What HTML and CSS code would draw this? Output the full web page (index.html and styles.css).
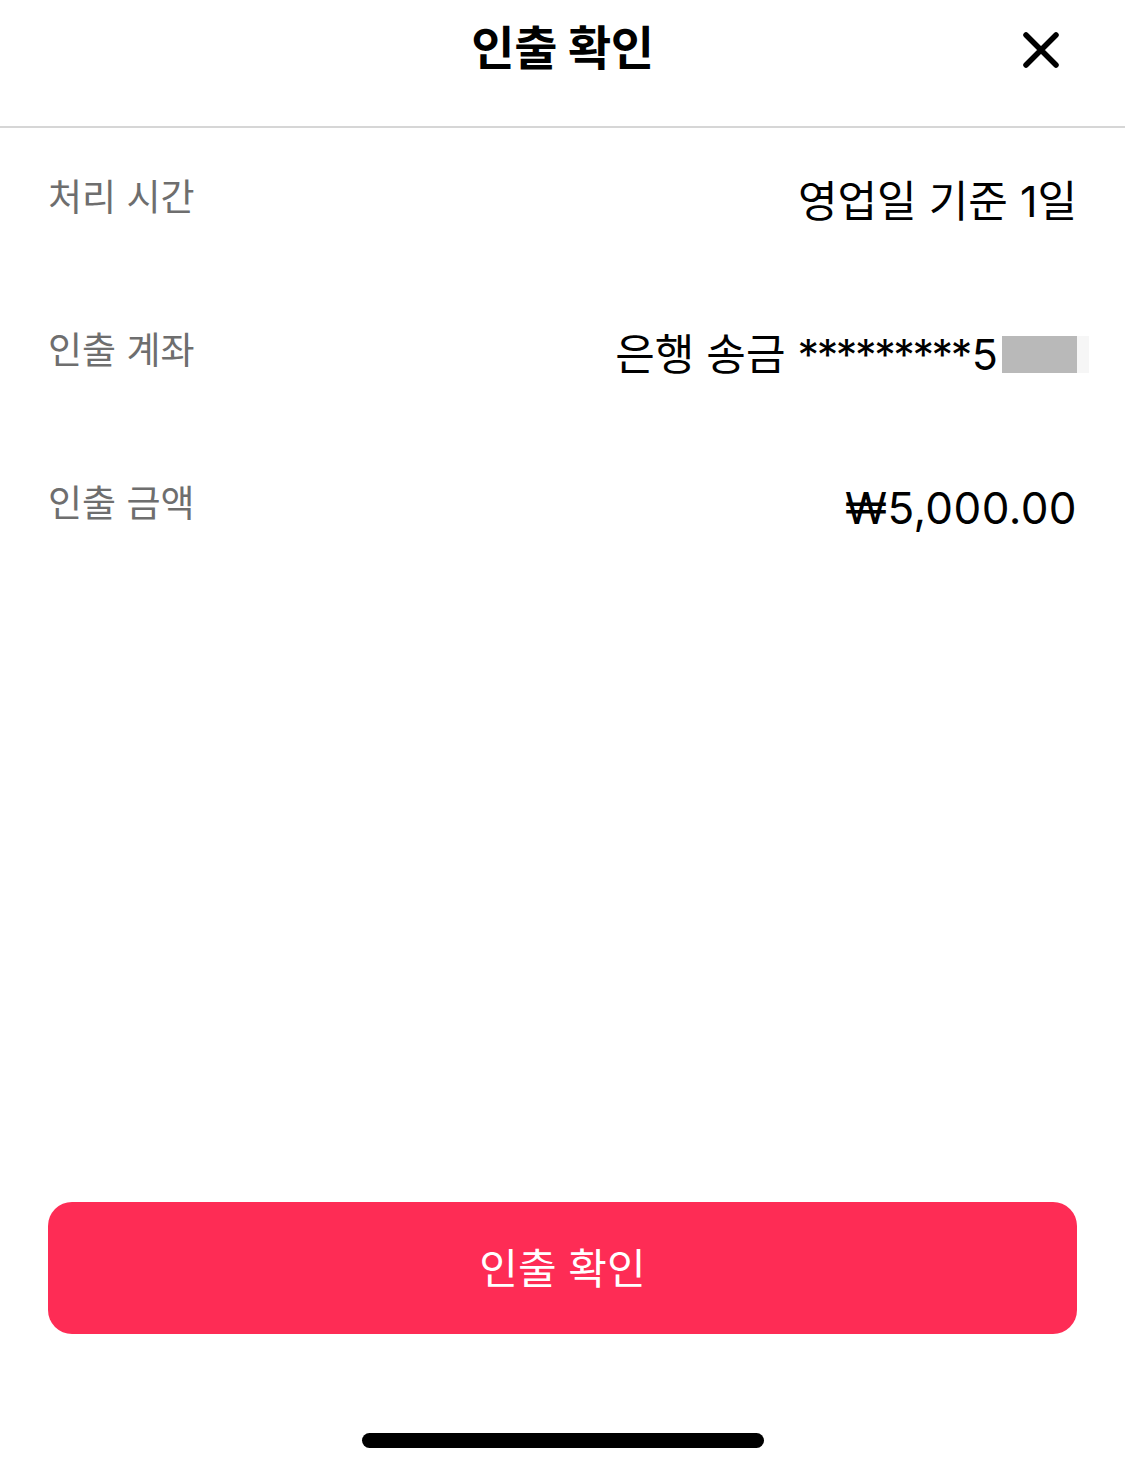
FILE: index.html
```html
<!DOCTYPE html>
<html lang="ko">
<head>
<meta charset="utf-8">
<title>인출 확인</title>
<link rel="stylesheet" href="styles.css">
</head>
<body>
<div class="screen">
  <header class="header">
    <h1 class="title">인출 확인</h1>
    <button class="close" aria-label="닫기">
      <svg width="40" height="40" viewBox="0 0 40 40"><path d="M5 5 L35 35 M35 5 L5 35" stroke="#000" stroke-width="5.5" stroke-linecap="round" fill="none"/></svg>
    </button>
  </header>
  <div class="rows">
    <div class="row">
      <span class="label">처리 시간</span>
      <span class="value">영업일 기준 1일</span>
    </div>
    <div class="row">
      <span class="label">인출 계좌</span>
      <span class="value">은행 송금&nbsp;<span class="stars">*********</span>5<span class="mask"></span></span>
    </div>
    <div class="row">
      <span class="label">인출 금액</span>
      <span class="value amount">₩5,000.00</span>
    </div>
  </div>
  <div class="spacer"></div>
  <div class="footer">
    <button class="confirm">인출 확인</button>
  </div>
  <div class="home-bar"><div class="home-indicator"></div></div>
</div>
</body>
</html>
```

FILE: styles.css
```css
* { box-sizing: border-box; }
html, body { margin: 0; padding: 0; background: #fff; }
body { font-family: "Inter", "Noto Sans CJK KR", "Noto Sans", sans-serif; color: #000; }
.screen {
  width: 1125px;
  height: 1472px;
  display: flex;
  flex-direction: column;
  overflow: hidden;
}
.header {
  position: relative;
  height: 128px;
  border-bottom: 2px solid #d6d6d6;
  display: flex;
  align-items: center;
  justify-content: center;
  flex-shrink: 0;
}
.title {
  margin: 0 0 32px 0;
  font-size: 47px;
  font-weight: 700;
  line-height: 1;
  letter-spacing: -0.3px;
}
.close {
  position: absolute;
  right: 64px;
  top: 30px;
  width: 40px;
  height: 40px;
  padding: 0;
  border: 0;
  background: none;
  display: flex;
}
.rows {
  display: flex;
  flex-direction: column;
  padding: 0 48px;
}
.row {
  height: 153px;
  display: flex;
  justify-content: space-between;
  align-items: center;
}
.label {
  font-size: 37px;
  color: #6e6e6e;
  line-height: 1;
  margin-top: -14px;
}
.value {
  font-size: 43px;
  color: #000;
  line-height: 1;
  display: flex;
  align-items: center;
  margin-top: -6px;
}
.stars {
  letter-spacing: -2.4px;
  margin-right: 2px;
}
.amount {
  font-size: 44px;
  font-weight: 400;
  letter-spacing: 0.4px;
}
.mask {
  display: inline-block;
  width: 75px;
  height: 37px;
  background: #b9b9b9;
  margin-left: 4px;
  box-shadow: 12px 0 0 #f6f6f6;
}
.spacer { flex: 1; }
.footer {
  padding: 0 48px;
}
.confirm {
  width: 100%;
  height: 132px;
  border: 0;
  border-radius: 24px;
  background: #fe2c55;
  color: #fff;
  font-family: "Noto Sans CJK KR", "Noto Sans", sans-serif;
  font-size: 42px;
  line-height: 1;
  padding: 0 0 4px 0;
}
.home-bar {
  height: 138px;
  display: flex;
  justify-content: center;
  align-items: flex-start;
  padding-top: 99px;
}
.home-indicator {
  width: 402px;
  height: 15px;
  border-radius: 8px;
  background: #000;
}
```
